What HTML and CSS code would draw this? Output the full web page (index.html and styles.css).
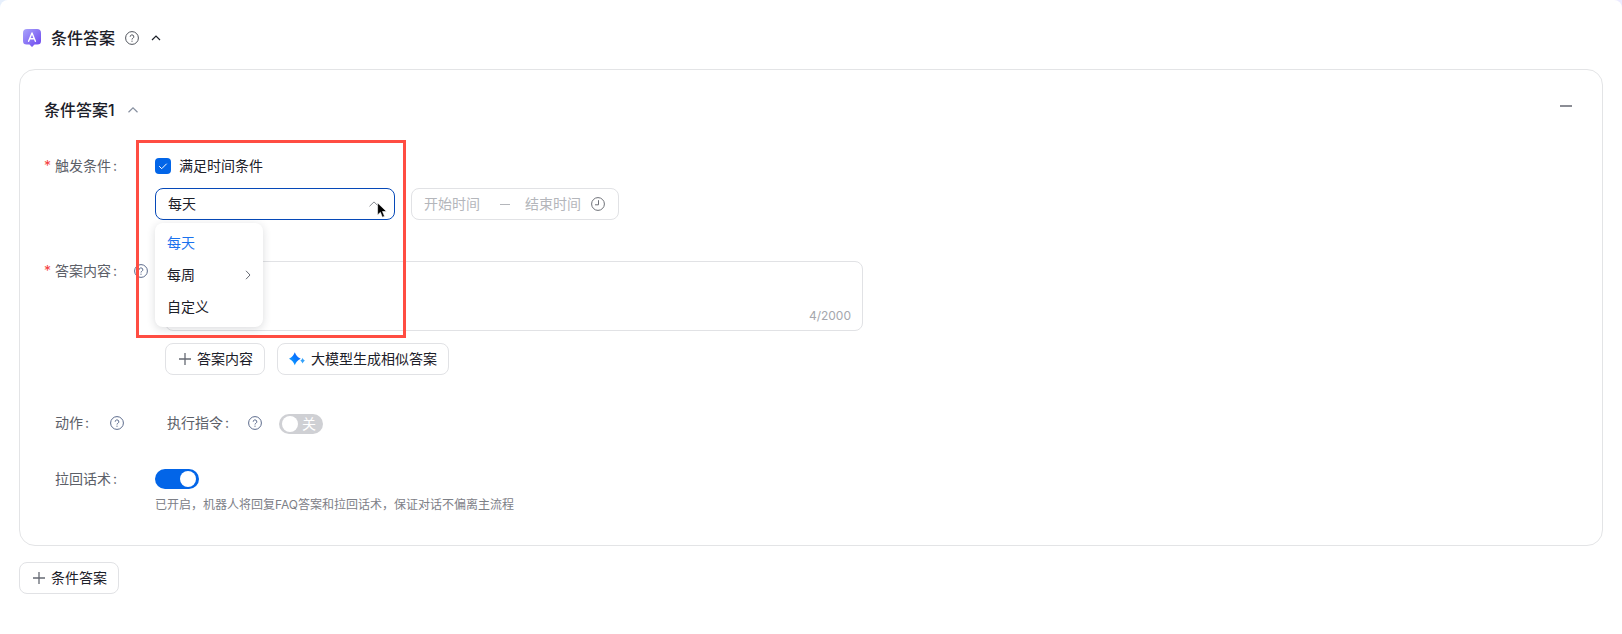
FILE: index.html
```html
<!DOCTYPE html>
<html lang="zh-CN">
<head>
<meta charset="utf-8">
<meta name="viewport" content="width=device-width, initial-scale=1">
<title>条件答案</title>
<link rel="stylesheet" href="styles.css">
</head>
<body>
<svg class="sprite" aria-hidden="true">
  <symbol id="help" viewBox="0 0 14 14">
    <circle cx="7" cy="7" r="6.4" fill="none" stroke="currentColor"/>
    <path d="M5.2 5.7a1.8 1.8 0 1 1 2.7 1.55c-.6.35-.9.6-.9 1.25" fill="none" stroke="currentColor"/>
    <circle cx="7" cy="10.2" r=".6" fill="currentColor"/>
  </symbol>
  <symbol id="plus" viewBox="0 0 12 12">
    <path d="M6 0v12M0 6h12" fill="none" stroke="currentColor" stroke-width="1.3"/>
  </symbol>
</svg>
<main class="panel">
  <header class="panel-head">
    <svg class="logo" viewBox="0 0 18 18" aria-hidden="true">
      <defs>
        <linearGradient id="logo-fill" x1="0" y1="0" x2="1" y2="1">
          <stop offset="0" stop-color="#a9a4fb"/>
          <stop offset="1" stop-color="#6a43ee"/>
        </linearGradient>
      </defs>
      <path d="M4 0h10a4 4 0 0 1 4 4v8a3.6 3.6 0 0 1-3.6 3.6H11.500L9 18l-2.500-2.400H3.600A3.600 3.600 0 0 1 0 12V4a4 4 0 0 1 4-4z" fill="url(#logo-fill)"/>
      <path d="M5.600 12.300 9 3.900l3.400 8.400M6.800 9.700h4.400" fill="none" stroke="#fff" stroke-width="1.400" stroke-linecap="round" stroke-linejoin="round"/>
    </svg>
    <h1 class="title">条件答案</h1>
    <button class="icon-button help-dark" type="button" aria-label="帮助"><svg class="icon"><use href="#help"/></svg></button>
    <button class="icon-button chevron-dark" type="button" aria-label="收起">
      <svg class="chevron" viewBox="0 0 10 6"><path d="M1 5l4-4 4 4" fill="none" stroke="currentColor" stroke-width="1.200"/></svg>
    </button>
  </header>

  <section class="card">
    <div class="card-head">
      <h2 class="title">条件答案1</h2>
      <button class="icon-button chevron-light" type="button" aria-label="收起">
        <svg class="chevron" viewBox="0 0 10 6"><path d="M.5 5.300 5 .9l4.500 4.400" fill="none" stroke="currentColor" stroke-width="1.200"/></svg>
      </button>
      <button class="icon-button remove" type="button" aria-label="删除"><span class="remove-bar"></span></button>
    </div>

    <div class="row">
      <div class="label required">触发条件<span class="colon">:</span></div>
      <div class="field trigger">
        <label class="check"><input class="check-box" type="checkbox" checked>满足时间条件</label>
        <div class="controls">
          <div class="select-wrap">
            <select class="select" aria-label="时间条件"><option>每天</option></select>
            <svg class="chevron select-arrow" viewBox="0 0 10 6" aria-hidden="true"><path d="M.5 5.300 5 .9l4.500 4.400" fill="none" stroke="currentColor"/></svg>
            <div class="menu">
              <button class="menu-item active" type="button">每天</button>
              <button class="menu-item" type="button">每周
                <svg class="menu-arrow" viewBox="0 0 6 10" aria-hidden="true"><path d="M1 .8 5 5 1 9.200" fill="none" stroke="currentColor"/></svg>
              </button>
              <button class="menu-item" type="button">自定义</button>
            </div>
            <svg class="pointer" viewBox="0 0 11 17" aria-hidden="true"><path d="M.6.9v12l2.800-2.600 2 4.900 2.100-.9-2-4.800h4z" fill="#000" stroke="#fff" stroke-width=".6"/></svg>
          </div>
          <div class="range">
            <input class="time" type="text" placeholder="开始时间" aria-label="开始时间">
            <span class="dash"></span>
            <input class="time" type="text" placeholder="结束时间" aria-label="结束时间">
            <svg class="icon clock" viewBox="0 0 14 14" aria-hidden="true"><circle cx="7" cy="7" r="6.400" fill="none" stroke="currentColor"/><path d="M7.500 3.200v4.600H4" fill="none" stroke="currentColor"/></svg>
          </div>
        </div>
        <div class="highlight"></div>
      </div>
    </div>

    <div class="row row-answer">
      <div class="label required">答案内容<span class="colon">:</span><button class="icon-button help-blue help-answer" type="button" aria-label="帮助"><svg class="icon"><use href="#help"/></svg></button></div>
      <div class="field answer">
        <div class="text-box">
          <textarea class="text-area" aria-label="答案内容"></textarea>
          <span class="count">4/2000</span>
        </div>
        <div class="actions">
          <button class="button" type="button"><svg class="plus"><use href="#plus"/></svg>答案内容</button>
          <button class="button spark-button" type="button">
            <svg class="spark" viewBox="0 0 16 14" aria-hidden="true">
              <defs><linearGradient id="spark-fill" x1="0" y1="1" x2="1" y2="0"><stop offset="0" stop-color="#19b5ff"/><stop offset=".5" stop-color="#087cff"/><stop offset="1" stop-color="#0a5cff"/></linearGradient></defs>
              <path d="M5.800.2C6.900 3.300 8.400 5 11.700 6.700 8.400 8.400 6.900 10.100 5.800 13.200 4.700 10.100 3.200 8.400 0 6.700 3.200 5 4.700 3.300 5.800.2z" fill="url(#spark-fill)"/>
              <path d="M13.600 5.800c.5 1.500 1 2.200 2.300 2.900-1.300.7-1.800 1.400-2.300 2.900-.5-1.500-1-2.200-2.300-2.900 1.300-.7 1.800-1.400 2.300-2.900z" fill="#35a2fa"/>
            </svg>大模型生成相似答案</button>
        </div>
      </div>
    </div>

    <div class="row row-action">
      <div class="label">动作<span class="colon">:</span><button class="icon-button help-blue help-action" type="button" aria-label="帮助"><svg class="icon"><use href="#help"/></svg></button></div>
      <div class="field command">
        <label class="command-label" for="command">执行指令<span class="colon">:</span></label>
        <button class="icon-button help-blue" type="button" aria-label="帮助"><svg class="icon"><use href="#help"/></svg></button>
        <span class="switch-wrap"><input class="switch" id="command" type="checkbox" role="switch"><span class="switch-text">关</span></span>
      </div>
    </div>

    <div class="row row-return">
      <label class="label" for="return">拉回话术<span class="colon">:</span></label>
      <div class="field return">
        <input class="switch" id="return" type="checkbox" role="switch" checked>
        <p class="note">已开启，机器人将回复FAQ答案和拉回话术，保证对话不偏离主流程</p>
      </div>
    </div>
  </section>

  <button class="button" type="button"><svg class="plus"><use href="#plus"/></svg>条件答案</button>
</main>
</body>
</html>
```
FILE: styles.css
```css
* { box-sizing: border-box; }

body {
  margin: 0;
  background: linear-gradient(90deg, #e6effc, #ecebff);
  color: #1c2029;
  font: 14px/24px Inter, "Noto Sans CJK SC", sans-serif;
}

button, input, select, textarea { font: inherit; color: inherit; }
button { cursor: pointer; }
svg { display: block; flex: none; }

.sprite { position: absolute; width: 0; height: 0; }

.panel {
  min-height: 100vh;
  padding: 26px 19px 40px;
  border-radius: 8px 8px 0 0;
  background: #fff;
}

.panel-head, .card-head { display: flex; align-items: center; }
.panel-head { padding-left: 4px; margin-bottom: 19px; }

.title { margin: 0; font-size: 16px; font-weight: 500; line-height: 24px; }

.logo { width: 18px; height: 18px; margin-right: 10px; }
.icon { width: 14px; height: 14px; }
.chevron { width: 10px; height: 6px; }
.plus { width: 12px; height: 12px; color: #666a73; }

.icon-button {
  display: flex;
  padding: 0;
  border: 0;
  background: none;
}
.help-dark { margin-left: 10px; color: #50545c; }
.help-blue { color: #5c6b8c; }
.chevron-dark { margin-left: 12px; color: #1c2029; }
.chevron-light { margin-left: 13px; color: #8790a0; }

.card {
  padding: 28px 30px 30px 24px;
  margin-bottom: 16px;
  border: 1px solid #e3e4e6;
  border-radius: 16px;
}
.card-head { margin-bottom: 32px; }
.remove { margin-left: auto; align-self: flex-start; padding: 7px 0; }
.remove-bar { width: 12px; height: 2px; background: #8b8d95; }

.row {
  display: grid;
  grid-template-columns: 111px minmax(0, 1fr);
}
.row-answer { margin-top: 39px; }
.row-action { margin-top: 36px; }
.row-return { margin-top: 32px; }

.label, .command-label { color: #5c6068; }
.label {
  display: flex;
  align-items: center;
  align-self: start;
  padding-left: 11px;
}
.required { position: relative; }
.required::before {
  content: "*";
  position: absolute;
  left: 0;
  color: #f53f3f;
}
.colon { margin-left: 2px; }
.help-answer { margin-left: auto; margin-right: 7px; }
.help-action { margin-left: auto; margin-right: 31px; }

.trigger { position: relative; }
.check { display: flex; align-items: center; gap: 8px; width: max-content; }
.check-box {
  appearance: none;
  width: 16px;
  height: 16px;
  margin: 0;
  border-radius: 4px;
  background: #fff;
  border: 1px solid #c9cbd1;
}
.check-box:checked {
  border: 0;
  background: #0265e8 url("data:image/svg+xml,%3Csvg xmlns='http://www.w3.org/2000/svg' viewBox='0 0 16 16'%3E%3Cpath d='M4.200 8.200l2.500 2.500 5-5' fill='none' stroke='white'/%3E%3C/svg%3E");
}

.controls { display: flex; gap: 16px; margin-top: 10px; }
.select-wrap { position: relative; width: 240px; }
.select {
  appearance: none;
  display: block;
  width: 100%;
  height: 32px;
  padding: 0 32px 0 12px;
  border: 1px solid #0649b8;
  border-radius: 8px;
  background: #fff;
}
.select-arrow { position: absolute; top: 13px; right: 16px; color: #85888f; }
.pointer { position: absolute; z-index: 4; top: 14px; right: 7px; width: 11px; height: 17px; }

.menu {
  position: absolute;
  z-index: 2;
  top: 35px;
  left: 0;
  width: 108px;
  padding: 4px 0;
  border-radius: 8px;
  background: #fff;
  box-shadow: 0 2px 8px rgba(30, 35, 50, 0.16);
}
.menu-item {
  display: flex;
  align-items: center;
  justify-content: space-between;
  width: 100%;
  height: 32px;
  padding: 0 12px;
  border: 0;
  background: none;
}
.menu-item.active { color: #1a72ee; }
.menu-arrow { width: 6px; height: 10px; color: #666a73; }

.range {
  display: flex;
  align-items: center;
  width: 208px;
  height: 32px;
  padding: 0 12px;
  border: 1px solid #e1e2e5;
  border-radius: 8px;
}
.time { width: 60px; padding: 0; border: 0; outline: 0; background: none; }
.time::placeholder { color: #b4b6bb; opacity: 1; }
.dash { width: 10px; height: 1px; margin: 0 15px 0 16px; background: #b4b6bb; }
.clock { margin-left: 6px; color: #6e7178; }

.highlight {
  position: absolute;
  z-index: 3;
  top: -14px;
  left: -19px;
  width: 270px;
  height: 198px;
  border: 3px solid #ff4d42;
  pointer-events: none;
}

.answer { padding: 2px 0 0 10px; }
.text-box { position: relative; max-width: 698px; }
.text-area {
  display: block;
  width: 100%;
  height: 70px;
  padding: 4px 12px;
  border: 1px solid #e1e2e5;
  border-radius: 8px;
  outline: 0;
  resize: none;
}
.count {
  position: absolute;
  right: 12px;
  bottom: 5px;
  color: #a5a7ad;
  font-size: 12px;
  line-height: 20px;
}
.actions { display: flex; gap: 12px; margin-top: 12px; }

.button {
  display: flex;
  align-items: center;
  gap: 6px;
  height: 32px;
  padding: 0 11px 0 13px;
  border: 1px solid #e1e2e5;
  border-radius: 8px;
  background: #fff;
}
.spark-button { padding: 0 11px; }
.spark { width: 16px; height: 14px; }

.command { display: flex; align-items: center; padding-left: 12px; }
.command-label { margin-right: 19px; }
.switch-wrap { position: relative; display: flex; margin-left: 17px; padding-top: 2px; }
.switch {
  appearance: none;
  display: block;
  width: 44px;
  height: 20px;
  margin: 0;
  padding: 2px 3px;
  border-radius: 10px;
  background: #cfd0d4;
}
.switch::before {
  content: "";
  display: block;
  width: 16px;
  height: 16px;
  border-radius: 50%;
  background: #fff;
}
.switch:checked { background: #0265e8; }
.switch:checked::before { margin-left: auto; }
.switch-text {
  position: absolute;
  top: 2px;
  right: 7px;
  color: #fff;
  line-height: 20px;
  pointer-events: none;
}

.return { padding-top: 2px; }
.note { margin: 6px 0 0; color: #7d8087; font-size: 12px; line-height: 20px; }
```
